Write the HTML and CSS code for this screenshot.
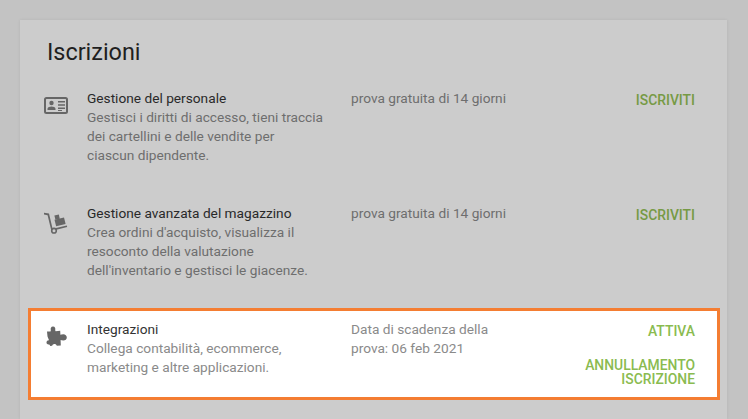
FILE: index.html
```html
<!DOCTYPE html>
<html lang="it">
<head>
  <meta charset="UTF-8" />
  <meta name="viewport" content="width=device-width, initial-scale=1.0"/>
  <title>Iscrizioni</title>
  <link rel="stylesheet" href="styles.css">
</head>
<body>
  <div class="card">
    <h1>Iscrizioni</h1>

    <div class="sub-row">
      <div class="sub-icon">
        <svg width="24" height="17" viewBox="0 0 24 17">
          <rect x="1" y="1" width="22" height="15" rx="1.5" fill="none" stroke="#666" stroke-width="2"/>
          <circle cx="7.5" cy="6" r="2.2" fill="#666"/>
          <path d="M3.5 13v-1.2c0-1.6 2.4-2.4 4-2.4s4 .8 4 2.4V13z" fill="#666"/>
          <path d="M14 4h7v1.5h-7zM14 7.2h7v1.5h-7zM14 10.4h7v1.5h-7zM14 13h4v1h-4z" fill="#666"/>
        </svg>
      </div>
      <div class="sub-text">
        <div class="sub-name">Gestione del personale</div>
        <div class="sub-desc">Gestisci i diritti di accesso, tieni traccia dei cartellini e delle vendite per ciascun dipendente.</div>
      </div>
      <div class="sub-info">prova gratuita di 14 giorni</div>
      <div class="sub-actions"><a class="action">Iscriviti</a></div>
    </div>

    <div class="sub-row">
      <div class="sub-icon">
        <svg width="24" height="22" viewBox="0 0 24 22">
          <path d="M0 .8l5 .8 3.600 15.200 14.200-3.400.4 1.700-15.800 3.800L3.600 3.200 0 2.600z" fill="#666"/>
          <circle cx="10" cy="18.700" r="2.300" fill="#ccc" stroke="#666" stroke-width="1.600"/>
          <path d="M10.500 7.800l9.500-2.200 1.600 6.500-9.500 2.200z" fill="#666"/>
          <path d="M10.400 3.400l4.400-1 1 4.300-4.400 1z" fill="#666"/>
        </svg>
      </div>
      <div class="sub-text">
        <div class="sub-name">Gestione avanzata del magazzino</div>
        <div class="sub-desc">Crea ordini d'acquisto, visualizza il resoconto della valutazione dell'inventario e gestisci le giacenze.</div>
      </div>
      <div class="sub-info">prova gratuita di 14 giorni</div>
      <div class="sub-actions"><a class="action">Iscriviti</a></div>
    </div>

    <div class="sub-row active">
      <div class="sub-icon">
        <svg width="22" height="21" viewBox="0 0 22 21">
          <path d="M1 5.500L4.500 5.400 4.800 4.300C4.300 2.500 5 .600 7 .600S9.700 2.500 9.200 4.300L9.600 5.200 14.200 4.800 14.400 8.800C15 8.500 16 8.300 17.300 8.300 19.300 8.300 20.800 9.800 20.800 11.500S19.300 14.500 17.300 14.500C16.200 14.500 15.200 14.200 14.600 14L14.800 19.600 10.800 19.800C10.500 18.600 9.500 18 8.300 18 7.200 18 6.500 18.800 6.200 19.800L4.200 19.900C3.800 19 3.400 18.400 2.700 18.500 1.300 18.600.4 17.500.5 16.200.6 14.800 1.800 14 3 14.200L1.500 10.500z" fill="#666"/>
        </svg>
      </div>
      <div class="sub-text">
        <div class="sub-name">Integrazioni</div>
        <div class="sub-desc">Collega contabilità, ecommerce, marketing e altre applicazioni.</div>
      </div>
      <div class="sub-info">Data di scadenza della prova: 06 feb 2021</div>
      <div class="sub-actions">
        <a class="action">Attiva</a>
        <a class="action">Annullamento iscrizione</a>
      </div>
    </div>
  </div>
</body>
</html>
```

FILE: styles.css
```css
html, body {
  height: 100%;
}

body {
  margin: 0;
  padding: 20px 21px 0 20px;
  box-sizing: border-box;
  overflow: hidden;
  background: #c3c3c3;
  font-family: Roboto, sans-serif;
  font-size: 13.7px;
  line-height: 19px;
}

.card {
  background: #ccc;
  height: 100%;
  padding: 18px 7px 0 8px;
  box-sizing: border-box;
  box-shadow: 0 0 3px rgba(0,0,0,0.08);
}

h1 {
  margin: 0 0 11px 19px;
  font-size: 23.4px;
  font-weight: 400;
  line-height: 28px;
  color: #1f1f1f;
}

.sub-row {
  display: grid;
  grid-template-columns: 56px 264px 1fr auto;
  padding: 9px 22px 7px 0;
  margin-bottom: 17px;
  border: 3px solid transparent;
}

.sub-icon {
  padding-left: 13px;
  padding-top: 8px;
  line-height: 0;
}

.sub-text {
  width: 237px;
}

.sub-name {
  color: #292929;
}

.sub-desc,
.sub-info {
  color: #6e6e6e;
}

.sub-info {
  width: 160px;
}

.sub-actions {
  display: flex;
  flex-direction: column;
  align-items: flex-end;
  gap: 20px;
  width: 120px;
  padding-top: 4px;
}

.action {
  color: #769a44;
  font-size: 13.9px;
  font-weight: 500;
  line-height: 14px;
  text-align: right;
  text-transform: uppercase;
}

.active {
  background: #fff;
  border-color: #f47d32;
  margin-top: 18px;
  margin-bottom: 0;
}

.active .sub-icon {
  padding-left: 15px;
  padding-top: 6px;
}

.active .sub-actions {
  padding-bottom: 4px;
}

.active .sub-name {
  color: #333;
}

.active .sub-desc,
.active .sub-info {
  color: #8a8a8a;
}

.active .action {
  color: #8abb50;
}
```
